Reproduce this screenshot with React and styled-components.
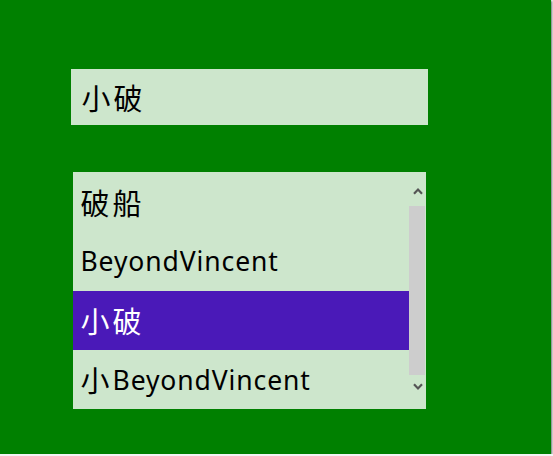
import React from 'react';
import styled, { createGlobalStyle } from 'styled-components';

const GlobalStyle = createGlobalStyle`
    html, body {
        margin: 0;
        padding: 0;
        background: #f4f4f4;
    }
    body {
        font-family: "Noto Sans", "Noto Sans CJK SC", sans-serif;
    }
`;

const Frame = styled.div`
    width: 551px;
    height: 454px;
    box-sizing: border-box;
    background: #008000;
    box-shadow: 1px 1px 2px rgba(0, 0, 0, 0.55);
    padding: 69px 0 0 71px;
    display: flex;
    flex-direction: column;
    gap: 47px;
`;

const TextBox = styled.div`
    width: 357px;
    height: 56px;
    box-sizing: border-box;
    background: #cde6cc;
    color: #000;
    font-size: 26.5px;
    letter-spacing: 0.9px;
    padding-left: 10.5px;
    display: flex;
    align-items: center;
`;

const ListBox = styled.div`
    margin-left: 2px;
    width: 353px;
    height: 237px;
    background: #cde6cc;
    display: grid;
    grid-template-columns: 1fr 17px;
`;

const Items = styled.div`
    display: grid;
    grid-template-rows: repeat(4, 1fr);
`;

const Item = styled.div`
    display: flex;
    align-items: center;
    padding-left: 7.5px;
    padding-top: 1px;
    font-size: 26.5px;
    letter-spacing: 0.9px;
    white-space: pre;
    color: ${(p) => (p.$selected ? '#ffffff' : '#000000')};
    background: ${(p) => (p.$selected ? '#4a19b8' : 'transparent')};
`;

const Cjk = styled.span`
    font-family: "Noto Sans CJK SC", sans-serif;
    font-size: 29px;
    letter-spacing: 3px;
    line-height: 1;
`;

const ScrollBar = styled.div`
    display: flex;
    flex-direction: column;
`;

const ArrowButton = styled.div`
    height: 34px;
    display: flex;
    justify-content: center;
    align-items: ${(p) => (p.$down ? 'flex-start' : 'flex-end')};
    padding: ${(p) => (p.$down ? '8px 0 0' : '0 0 11px')};
    box-sizing: border-box;
`;

const Thumb = styled.div`
    flex: 1;
    width: 16px;
    background: #cdcdcd;
`;

const Chevron = ({ down }) => (
    <svg width="10" height="7" viewBox="0 0 10 7">
        <polyline
            points={down ? '1,1.2 5,5.4 9,1.2' : '1,5.8 5,1.6 9,5.8'}
            fill="none"
            stroke="#555555"
            strokeWidth="2.2"
        />
    </svg>
);

// CJK runs get a larger face, as the reference's CJK fallback font is bigger
const Label = ({ text }) =>
    text.split(/([\u4e00-\u9fff]+)/).map((part, i) =>
        /[\u4e00-\u9fff]/.test(part) ? <Cjk key={i}>{part}</Cjk> : part
    );

const items = ['破船', 'BeyondVincent', '小破', '小BeyondVincent'];

const App = () => {
    const selected = '小破';
    return (
        <>
            <GlobalStyle />
            <Frame>
                <TextBox>
                    <Label text={selected} />
                </TextBox>
                <ListBox>
                    <Items>
                        {items.map((text) => (
                            <Item key={text} $selected={text === selected}>
                                <Label text={text} />
                            </Item>
                        ))}
                    </Items>
                    <ScrollBar>
                        <ArrowButton>
                            <Chevron />
                        </ArrowButton>
                        <Thumb />
                        <ArrowButton $down>
                            <Chevron down />
                        </ArrowButton>
                    </ScrollBar>
                </ListBox>
            </Frame>
        </>
    );
};

export default App;
